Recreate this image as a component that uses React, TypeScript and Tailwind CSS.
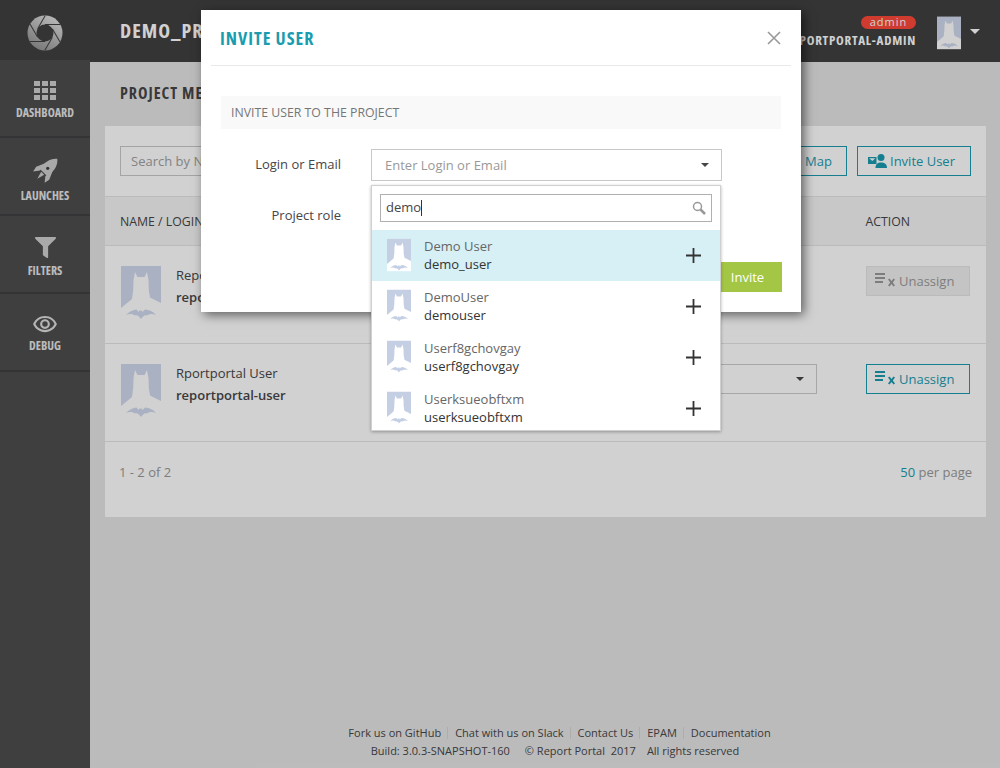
import { FaFilter } from "react-icons/fa";
import { MdOutlineRemoveRedEye } from "react-icons/md";

const menu = [
  { label: "DASHBOARD", icon: "grid" },
  { label: "LAUNCHES", icon: "rocket" },
  { label: "FILTERS", icon: "filter" },
  { label: "DEBUG", icon: "eye" },
];

const found = [
  { name: "Demo User", login: "demo_user", active: true },
  { name: "DemoUser", login: "demouser" },
  { name: "Userf8gchovgay", login: "userf8gchovgay" },
  { name: "Userksueobftxm", login: "userksueobftxm" },
];

function Avatar({ bg, fg, className }: { bg: string; fg: string; className: string }) {
  return (
    <svg viewBox="0 0 40 54" className={className}>
      <rect width="40" height="54" fill={fg} />
      <path fill={bg} d="M0 0H40V37L29 31.500 27.800 24 27.500 14 26 6 23.500 11H16.500L14 6 12.500 14 12.200 24 11 33 0 42Z" />
      <path fill={bg} d="M5 49C9 45 12 44 15.500 43.500L17.500 46 18.500 44.500H20.500L21.500 46 24 43.500C28 44 32 45 35 49 31 47.500 28.500 47.500 26 49.500 24 48.500 22 50 20 53 18 50 16 48.500 14 49.500 11.500 47.500 8 47.500 5 49Z" />
    </svg>
  );
}

function Logo() {
  const blades = [0, 60, 120, 180, 240, 300];
  return (
    <svg viewBox="0 0 36 36" className="h-[36px] w-[36px]">
      <defs>
        <linearGradient id="ring" x1="0.8" y1="0" x2="0.2" y2="1">
          <stop offset="0" stopColor="#e4e4e4" />
          <stop offset="1" stopColor="#8f8f8f" />
        </linearGradient>
      </defs>
      <circle cx="18" cy="18" r="17.500" fill="url(#ring)" />
      <circle cx="18" cy="18" r="8.500" fill="#404040" />
      {blades.map((a) => (
        <path key={a} transform={`rotate(${a} 18 18)`} d="M18 9.500H33" stroke="#404040" strokeWidth="1" />
      ))}
    </svg>
  );
}

function RocketIcon() {
  return (
    <svg viewBox="0 0 24 24" className="-my-px h-[26px] w-[26px]" fill="#cfcfcf">
      <g transform="rotate(45 12 12)">
        <path d="M12 -4C17 0 18 6 17 14H7C6 6 7 0 12 -4Z" />
        <path d="M7 7 3.500 15 4.500 20 8.500 15Z" />
        <path d="M17 7 20.500 15 19.500 20 15.500 15Z" />
        <path d="M10 15H14L12 22Z" />
      </g>
      <circle cx="14.500" cy="9.500" r="1.500" fill="#404042" />
    </svg>
  );
}

function UnassignIcon() {
  return (
    <svg viewBox="0 0 20 14" className="h-[14px] w-5 -translate-y-px" fill="currentColor">
      <rect x="0" y="0" width="10" height="2" />
      <rect x="0" y="4" width="10" height="2" />
      <rect x="0" y="8" width="8" height="2" />
      <path d="M13 6.500 14.500 5.500 16.500 8 18.500 5.500 20 6.500 17.800 9.500 20 12.500 18.500 13.500 16.500 11 14.500 13.500 13 12.500 15.200 9.500Z" />
    </svg>
  );
}

function InviteIcon() {
  return (
    <svg viewBox="0 0 19 14" className="h-[14px] w-[19px]" fill="currentColor">
      <path fillRule="evenodd" d="M0 3H8.500V10H0ZM1.200 4.200 4.250 7 7.300 4.200Z" />
      <circle cx="13" cy="3.500" r="3.500" />
      <path d="M7.500 14C7.500 10 9.500 8.500 13 8.500S19 10 19 14Z" />
    </svg>
  );
}

function MenuIcon({ name }: { name: string }) {
  if (name === "grid") {
    return (
      <div className="grid grid-cols-3 gap-[2px]">
        {Array.from({ length: 9 }).map((_, i) => (
          <div key={i} className="h-[5px] w-[6px] bg-[#cfcfcf]" />
        ))}
      </div>
    );
  }
  if (name === "rocket") return <RocketIcon />;
  if (name === "filter") return <FaFilter className="h-[21px] w-[21px] text-[#cfcfcf]" />;
  return <MdOutlineRemoveRedEye className="-my-[4px] h-[26px] w-[26px] text-[#dcdcdc]" />;
}

function Caret({ className }: { className: string }) {
  return <div className={`h-0 w-0 border-x-transparent ${className}`} />;
}

const condensed = "font-bold [font-stretch:75%]";

export default function App() {
  return (
    <div className="relative flex h-[768px] w-[1000px] overflow-hidden bg-[#e5e5e5] font-['Open_Sans',sans-serif] text-[13px] text-[#464547]">
      <aside className="flex w-[90px] shrink-0 flex-col bg-[#4d4d4f]">
        <div className="flex h-[60px] items-center justify-center bg-[#404040] pt-[6px]">
          <Logo />
        </div>
        {menu.map((item) => (
          <div key={item.label} className="flex h-[78px] flex-col items-center gap-[5px] border-b-2 border-[#404042] pt-[21px]">
            <MenuIcon name={item.icon} />
            <span className={`text-[12px] leading-[15px] text-[#e6e6e6] ${condensed}`}>{item.label}</span>
          </div>
        ))}
      </aside>

      <div className="flex min-w-0 flex-1 flex-col">
        <header className="flex h-[62px] shrink-0 items-center bg-[#404040] pl-[30px] pr-5">
          <span className={`text-[20px] tracking-[1px] text-[#ffffff] ${condensed}`}>DEMO_PROJECT</span>
          <div className="ml-auto mt-[3px] flex flex-col items-end">
            <span className="flex h-[13px] w-[55px] items-center justify-center rounded-full bg-[#fd4a3a] text-[11px] tracking-[1px] text-white">admin</span>
            <span className={`mt-[2px] text-[13px] leading-[18px] tracking-[.75px] text-white ${condensed}`}>REPORTPORTAL-ADMIN</span>
          </div>
          <Avatar bg="#d0d8ee" fg="#ffffff" className="ml-[21px] mt-[4px] h-[34px] w-[24px]" />
          <Caret className="ml-[9px] border-x-[5px] border-t-[5px] border-t-white" />
        </header>

        <main className="flex flex-1 flex-col pl-[15px] pr-[14px]">
          <h1 className={`ml-[15px] mt-[20px] text-[16px] leading-[22px] tracking-[1px] text-[#464547] ${condensed}`}>PROJECT MEMBERS</h1>
          <section className="mt-[22px] bg-white">
            <div className="flex h-[70px] items-center gap-[10px] px-[15px]">
              <div className="flex h-[30px] w-[300px] items-center border border-[#c8c8c8] px-[10px] pt-[2px] text-[#a0a0a0]">Search by Name</div>
              <div className="ml-auto flex h-[30px] items-center border border-[#1a9cb0] pl-[13px] pr-[14px] pt-[2px] text-[#1a9cb0]">Permission Map</div>
              <div className="flex h-[30px] w-[114px] items-center gap-[3px] border border-[#1a9cb0] pl-[10px] text-[#1a9cb0]">
                <InviteIcon />
                <span className="pt-[2px]">Invite User</span>
              </div>
            </div>
            <div className="flex h-[50px] items-center justify-between border-y border-[#e5e5e5] bg-[#f4f4f4] pl-[15px] pr-[76px] pt-[2px] text-[12.3px]">
              <span>NAME / LOGIN</span>
              <span>ACTION</span>
            </div>
            <MemberRow name="Reportportal Admin" login="reportportal-admin" disabled />
            <MemberRow name="Rportportal User" login="reportportal-user" />
            <div className="flex h-[75px] items-start justify-between px-[14px] pt-[21px] text-[#999999]">
              <span>1 - 2 of 2</span>
              <span>
                <span className="text-[#1a9cb0]">50</span> per page
              </span>
            </div>
          </section>
          <footer className="mt-auto flex flex-col items-center pb-[8px] pl-[28px] text-[11px] leading-[18px]">
            <div className="flex items-center">
              {["Fork us on GitHub", "Chat with us on Slack", "Contact Us", "EPAM", "Documentation"].map((link, i) => (
                <span key={link} className={i > 0 ? "ml-[6px] border-l border-[#d4d4d4] pl-[7px] leading-3" : "leading-3"}>
                  {link}
                </span>
              ))}
            </div>
            <div className="mr-[9px] mt-[3px] flex gap-[15px]">
              <span>Build: 3.0.3-SNAPSHOT-160</span>
              <span>© Report Portal&nbsp; 2017</span>
              <span className="ml-[-4px]">All rights reserved</span>
            </div>
          </footer>
        </main>
      </div>

      <div className="absolute inset-0 bg-black/[.18]" />

      <div className="absolute left-[201px] top-[10px] h-[302px] w-[600px] bg-white px-[10px] shadow-[3px_3px_10px_rgba(0,0,0,.55)]">
        <div className="flex h-[56px] items-center justify-between border-b border-[#e9e9e9] pl-[9px] pr-[10px]">
          <span className={`pt-[2px] text-[18px] tracking-[1px] text-[#1a9cb0] ${condensed}`}>INVITE USER</span>
          <svg viewBox="0 0 14 14" className="h-[14px] w-[14px] text-[#999999]" stroke="currentColor" strokeWidth="1.600">
            <path d="M1 1 13 13M13 1 1 13" />
          </svg>
        </div>
        <div className="mx-[10px] mt-[30px] flex h-[33px] items-center bg-[#f9f9f9] pl-[10px] pt-[2px] text-[12.3px] text-[#767676]">
          INVITE USER TO THE PROJECT
        </div>
        <div className="ml-[10px] mt-[20px] flex items-center">
          <span className="w-[120px] text-right">Login or Email</span>
          <div className="ml-[30px] flex h-[32px] w-[351px] items-center justify-between border border-[#c8c8c8] pl-[13px] pr-[12px] text-[#999999]">
            <span className="pt-[2px]">Enter Login or Email</span>
            <Caret className="border-x-[4px] border-t-[4px] border-t-[#464547]" />
          </div>
        </div>
        <div className="ml-[10px] mt-[25px] w-[120px] text-right leading-[18px]">Project role</div>
        <div className="absolute left-[520px] top-[252px] flex h-[30px] w-[61px] items-center justify-center bg-[#a3c644] pr-[8px] pt-[2px] text-white">Invite</div>

        <div className="absolute left-[170px] top-[175px] z-10 h-[246px] w-[350px] overflow-hidden border border-[#d0d0d0] bg-white shadow-[0_1px_3px_rgba(0,0,0,.3)]">
          <div className="px-[8px] py-[8px]">
            <div className="flex h-[28px] items-center justify-between border border-[#b0b0b0] px-[5px]">
              <span className="flex items-center">
                demo<span className="h-[16px] w-px bg-[#333333]" />
              </span>
              <svg viewBox="0 0 14 14" className="h-[14px] w-[14px]" fill="none" stroke="#999999">
                <circle cx="5.500" cy="5.500" r="4" strokeWidth="1.500" />
                <path d="M8.500 8.500 13 13" strokeWidth="2.500" />
              </svg>
            </div>
          </div>
          {found.map((user) => (
            <div key={user.login} className={`flex h-[51px] items-center pb-[1px] pl-[15px] pr-[19px] ${user.active ? "bg-[#d6f0f5]" : ""}`}>
              <Avatar bg="#c5cfe3" fg="#ffffff" className="h-[34px] w-[24px]" />
              <div className="ml-[13px] flex flex-col leading-[18px]">
                <span className="text-[#666666]">{user.name}</span>
                <span className="font-medium text-[#333333]">{user.login}</span>
              </div>
              <svg viewBox="0 0 15 15" className="ml-auto h-[15px] w-[15px]" stroke="#333333" strokeWidth="1.800">
                <path d="M7.500 0V15M0 7.500H15" />
              </svg>
            </div>
          ))}
        </div>
      </div>
    </div>
  );
}

function MemberRow({ name, login, disabled }: { name: string; login: string; disabled?: boolean }) {
  return (
    <div className="flex h-[98px] items-start border-b border-[#e5e5e5] pl-[16px] pt-[20px]">
      <Avatar bg="#cfd8ee" fg="#ffffff" className="h-[54px] w-[40px]" />
      <div className="ml-[15px] -mt-[2px] flex flex-col leading-[22px]">
        <span>{name}</span>
        <span className="font-semibold">{login}</span>
      </div>
      <div className={`ml-auto flex h-[30px] w-[300px] items-center justify-end border border-[#cccccc] pr-[12px] ${disabled ? "invisible" : ""}`}>
        <Caret className="border-x-[4px] border-t-[4px] border-t-[#464547]" />
      </div>
      <div className={`ml-[49px] mr-[16px] flex h-[30px] w-[104px] items-center gap-[4px] border pl-[8px] ${disabled ? "border-[#e5e5e5] bg-[#f0f0f0] text-[#999999]" : "border-[#1a9cb0] text-[#1a9cb0]"}`}>
        <UnassignIcon />
        <span className="pt-[2px]">Unassign</span>
      </div>
    </div>
  );
}
